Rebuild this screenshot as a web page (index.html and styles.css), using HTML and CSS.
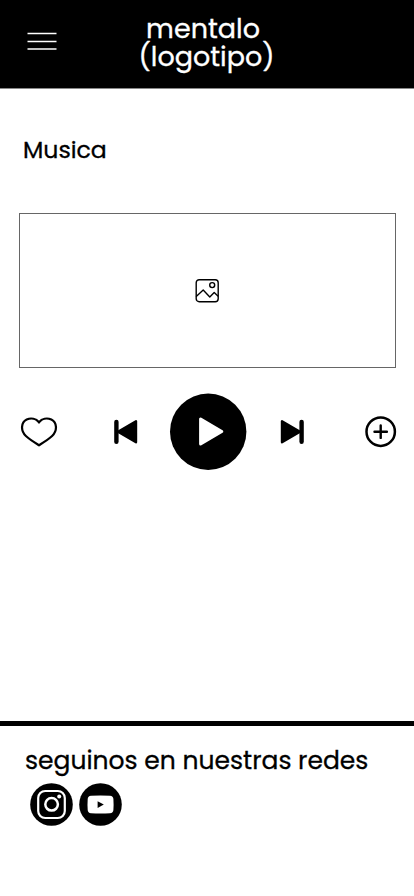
FILE: index.html
```html
<!DOCTYPE html>
<html lang="es">
<head>
<meta charset="utf-8">
<title>mentalo</title>
<link rel="stylesheet" href="styles.css">
</head>
<body>
<header class="header">
  <svg class="menu" width="30" height="18" viewBox="0 0 30 18"><path d="M.5 1.6H29.5M.5 9.4H29.5M.5 17H29.5" stroke="#fff" stroke-width="1.5"/></svg>
  <div class="logo"><span class="logo-name">mentalo</span><br>(logotipo)</div>
</header>
<main class="main">
  <h1 class="title">Musica</h1>
  <div class="cover">
    <svg width="24" height="24" viewBox="0 0 24 24" fill="none" stroke="#000" stroke-width="1.4" stroke-linejoin="round" stroke-linecap="round"><rect x="1.2" y=".7" width="22" height="22" rx="3"/><circle cx="17.2" cy="6.1" r="2.5"/><path d="M1.5 17.2L8.2 11L14.8 17.9L19.2 13.5L22.9 16.9"/></svg>
  </div>
  <div class="controls">
    <svg width="38" height="30" viewBox="0 0 38 30"><path d="M19 28.2C14.5 25.4 9.8 22.6 5.9 19C.3 13.6 1 5.4 6.7 2.5C11 .5 16 1.6 19 5.2C22 1.6 27 .5 31.3 2.5C37 5.4 37.7 13.6 32.1 19C28.2 22.6 23.5 25.4 19 28.2Z" fill="none" stroke="#000" stroke-width="2.2"/></svg>
    <svg width="24" height="26" viewBox="0 0 24 26"><path d="M2.4 3V22.7" stroke="#000" stroke-width="4.4" stroke-linecap="round"/><path d="M22 2.3V23.3L4 12.8Z" stroke="#000" stroke-width="2.4" stroke-linejoin="round"/></svg>
    <svg width="78" height="78" viewBox="0 0 78 78"><circle cx="39.2" cy="38.7" r="38.2"/><path d="M31.6 26V51L52.8 38.5Z" fill="#fff" stroke="#fff" stroke-width="3" stroke-linejoin="round"/></svg>
    <svg width="24" height="26" viewBox="0 0 24 26"><path d="M21.6 3V22.7" stroke="#000" stroke-width="4.4" stroke-linecap="round"/><path d="M2 2.3V23.3L20 12.8Z" stroke="#000" stroke-width="2.4" stroke-linejoin="round"/></svg>
    <svg width="32" height="32" viewBox="0 0 32 32" fill="none" stroke="#000"><circle cx="15.7" cy="15.7" r="14.2" stroke-width="2.5"/><path d="M15.7 9.5V21.9M9.5 15.7H21.9" stroke-width="2.4" stroke-linecap="round"/></svg>
  </div>
</main>
<footer class="footer">
  <p class="follow">seguinos en nuestras redes</p>
  <div class="social">
    <svg width="43" height="43" viewBox="0 0 43 43"><circle cx="21.5" cy="21.5" r="21.3"/><g fill="none" stroke="#fff" stroke-width="2.2"><rect x="8.2" y="8" width="26.6" height="27" rx="7"/><circle cx="21.6" cy="21.3" r="6.3" stroke-width="2.5"/></g><circle cx="29.2" cy="13.4" r="2" fill="#fff"/></svg>
    <svg width="43" height="43" viewBox="0 0 43 43"><circle cx="21.5" cy="21.5" r="21.3"/><path d="M12 12.8Q21.5 12.2 31 12.8Q34.2 13 34.4 16Q34.8 21.5 34.4 27Q34.2 30 31 30.2Q21.5 30.8 12 30.2Q8.9 30 8.7 27Q8.3 21.5 8.7 16Q8.9 13 12 12.8Z" fill="#fff"/><path d="M18.6 18.2V25L24.8 21.6Z"/></svg>
  </div>
</footer>
</body>
</html>
```

FILE: styles.css
```css
* { box-sizing: border-box; }
body {
  margin: 0;
  width: 414px;
  height: 896px;
  display: flex;
  flex-direction: column;
  background: #fff;
  color: #000;
  font-family: Poppins, Inter, "Liberation Sans", sans-serif;
  font-weight: 400;
  -webkit-text-stroke: 0.3px currentColor;
  overflow: hidden;
}
svg { display: block; flex: none; }
.header {
  height: 89px;
  background: #000;
  border-bottom: 1px solid #888;
  color: #fff;
  display: grid;
  grid-template-columns: 112px 189px 1fr;
  align-items: start;
}
.menu { margin: 32px 0 0 27px; }
.logo {
  padding-top: 15px;
  font-size: 27px;
  line-height: 28px;
  text-align: center;
}
.logo-name { margin-right: 7px; }
.main { height: 632px; padding: 46px 18px 0 19px; }
.title {
  margin: 0 0 0 4px;
  font-size: 23.6px;
  line-height: 30px;
  font-weight: 400;
}
.cover {
  margin-top: 48px;
  height: 155px;
  border: 1px solid #666;
  display: flex;
  align-items: center;
  justify-content: center;
}
.cover svg { margin: 1px 1px 0 0; }
.controls {
  margin: 25px 0 0 1px;
  display: grid;
  grid-template-columns: 94px 55px 111px 85px 32px;
  align-items: center;
}
.footer {
  flex: 1;
  border-top: 5px solid #000;
  padding: 19px 25px 0;
}
.follow {
  margin: 0;
  font-size: 25px;
  line-height: 32px;
  white-space: nowrap;
}
.social { display: flex; gap: 6px; margin: 6px 0 0 5px; }
```
